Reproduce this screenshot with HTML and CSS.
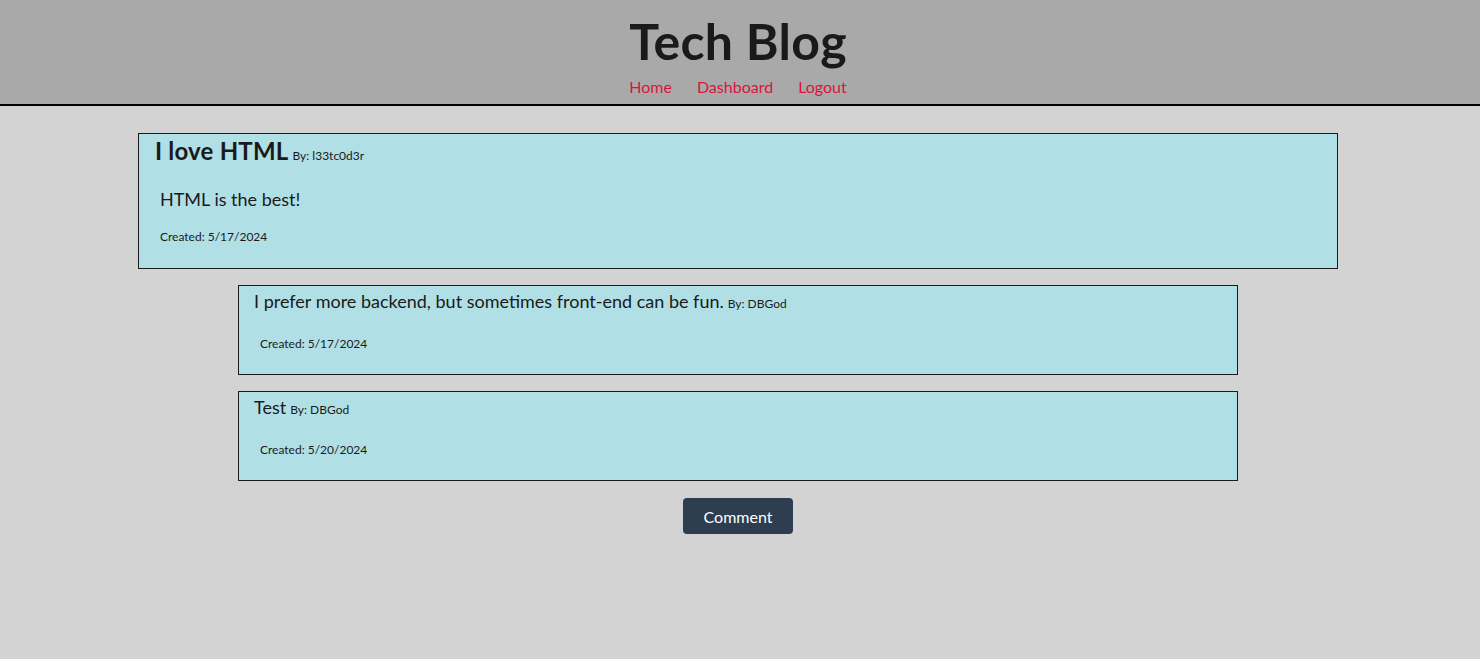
FILE: index.html
```html
<!DOCTYPE html>
<html lang="en">
<head>
<meta charset="utf-8">
<title>Tech Blog</title>
<link rel="stylesheet" href="styles.css">
</head>
<body>
<header class="site-header">
  <h1 class="site-title">Tech Blog</h1>
  <nav class="site-nav">
    <a href="#">Home</a>
    <a href="#">Dashboard</a>
    <a href="#">Logout</a>
  </nav>
</header>
<main class="content">
  <article class="post">
    <div class="post-head">
      <h2 class="post-title">I love HTML</h2>
      <span class="by">By: l33tc0d3r</span>
    </div>
    <p class="post-body">HTML is the best!</p>
    <p class="created">Created: 5/17/2024</p>
  </article>
  <section class="comments">
    <div class="comment">
      <div class="comment-head">
        <span class="comment-text">I prefer more backend, but sometimes front-end can be fun.</span>
        <span class="by">By: DBGod</span>
      </div>
      <p class="created">Created: 5/17/2024</p>
    </div>
    <div class="comment">
      <div class="comment-head">
        <span class="comment-text">Test</span>
        <span class="by">By: DBGod</span>
      </div>
      <p class="created">Created: 5/20/2024</p>
    </div>
  </section>
  <div class="actions">
    <button class="btn" type="button">Comment</button>
  </div>
</main>
</body>
</html>
```

FILE: styles.css
```css
* { box-sizing: border-box; }
html, body { margin: 0; }
body {
  background: #d3d3d3;
  color: #1a1a1a;
  font-family: Lato, "Open Sans", sans-serif;
  min-height: 659px;
  padding-right: 4px;
}
.site-header {
  background: #a9a9a9;
  border-bottom: 2px solid #000;
  height: 106px;
  margin-right: -4px;
  padding-right: 4px;
  text-align: center;
  padding-top: 11px;
}
.site-title {
  margin: 0;
  font-size: 50px;
  line-height: 61px;
  font-weight: 700;
  letter-spacing: 0.3px;
}
.site-nav {
  display: flex;
  justify-content: center;
  gap: 25px;
  font-size: 16px;
  line-height: 22px;
  margin-top: 4px;
}
.site-nav a {
  color: #dc143c;
  text-decoration: none;
}
.content {
  padding-top: 27px;
  display: flex;
  flex-direction: column;
  align-items: center;
}
.post {
  width: 1200px;
  height: 136px;
  background: #b0e0e6;
  border: 1px solid #1a1a1a;
  padding: 1px 16px 0;
}
.post-head {
  display: flex;
  align-items: baseline;
  gap: 4px;
}
.post-title {
  margin: 0;
  font-size: 24px;
  line-height: 32px;
  font-weight: 700;
  letter-spacing: 0.2px;
}
.by {
  font-size: 12px;
}
.post-body {
  margin: 20px 0 0 5px;
  font-size: 18px;
  line-height: 24px;
}
.created {
  margin: 18px 0 0 5px;
  font-size: 12px;
  line-height: 16px;
}
.comments {
  display: flex;
  flex-direction: column;
  gap: 16px;
  margin-top: 16px;
}
.comment {
  width: 1000px;
  height: 90px;
  background: #b0e0e6;
  border: 1px solid #1a1a1a;
  padding: 3px 15px 0;
}
.comment-head {
  display: flex;
  align-items: baseline;
  gap: 4px;
}
.comment-text {
  font-size: 18px;
  line-height: 24px;
}
.comment .created {
  margin-top: 23px;
  margin-left: 6px;
}
.actions {
  margin-top: 17px;
}
.btn {
  width: 110px;
  height: 36px;
  background: #2c3e50;
  color: #fff;
  border: 0;
  border-radius: 4px;
  font-family: inherit;
  font-size: 16px;
  cursor: pointer;
}
```
